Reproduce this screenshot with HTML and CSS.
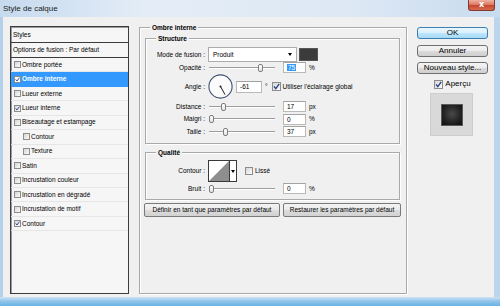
FILE: index.html
```html
<!DOCTYPE html>
<html lang="fr">

<head>
    <meta charset="UTF-8" />
    <title>Style de calque</title>
    <link rel="stylesheet" href="styles.css">
</head>

<body>
    <div class="window">
        <!-- barre de titre -->
        <div class="titlebar">
            <span class="title">Style de calque</span>
            <span class="close">x</span>
        </div>
        <div class="content">
            <!-- liste des styles -->
            <div class="styles">
                <div class="head head-top">Styles</div>
                <div class="head">Options de fusion : Par défaut</div>
                <div class="item"><span class="cb"></span>Ombre portée</div>
                <div class="item active"><span class="cb on"><svg viewBox="0 0 7 7"><path d="M1 3.4 L2.8 5.6 L6.2 0.9" /></svg></span>Ombre interne</div>
                <div class="item"><span class="cb"></span>Lueur externe</div>
                <div class="item"><span class="cb on"><svg viewBox="0 0 7 7"><path d="M1 3.4 L2.8 5.6 L6.2 0.9" /></svg></span>Lueur interne</div>
                <div class="item"><span class="cb"></span>Biseautage et estampage</div>
                <div class="item sub"><span class="cb"></span>Contour</div>
                <div class="item sub"><span class="cb"></span>Texture</div>
                <div class="item"><span class="cb"></span>Satin</div>
                <div class="item"><span class="cb"></span>Incrustation couleur</div>
                <div class="item"><span class="cb"></span>Incrustation en dégradé</div>
                <div class="item"><span class="cb"></span>Incrustation de motif</div>
                <div class="item"><span class="cb on"><svg viewBox="0 0 7 7"><path d="M1 3.4 L2.8 5.6 L6.2 0.9" /></svg></span>Contour</div>
            </div>

            <!-- réglages de l'effet -->
            <div class="group main">
                <div class="legend">Ombre interne</div>

                <div class="group structure">
                    <div class="legend">Structure</div>
                    <div class="row row-mode">
                        <span class="lbl">Mode de fusion :</span>
                        <div class="select">Produit<span class="arrow"></span></div>
                        <div class="swatch"></div>
                    </div>
                    <div class="row">
                        <span class="lbl">Opacité :</span>
                        <div class="slider"><div class="track"></div><span class="thumb" style="left: 74%"></span></div>
                        <div class="field"><span class="sel">75</span></div>
                        <span class="unit">%</span>
                    </div>
                    <div class="row row-angle">
                        <span class="lbl">Angle :</span>
                        <svg class="dial" width="25" height="25" viewBox="0 0 25 25">
                            <circle cx="12.5" cy="12.5" r="11.6" fill="#fbfbfb" stroke="#3f5274" stroke-width="1.1" />
                            <line x1="12.5" y1="12.5" x2="17" y2="20.6" stroke="#1c1c1c" stroke-width="1" />
                            <circle cx="12.5" cy="12.5" r="1" fill="#1c1c1c" />
                        </svg>
                        <div class="field field-angle">-61</div>
                        <span class="deg">°</span>
                        <span class="cb cb-big on"><svg viewBox="0 0 7 7"><path d="M1 3.4 L2.8 5.6 L6.2 0.9" /></svg></span>
                        <span class="cb-text">Utiliser l'éclairage global</span>
                    </div>
                    <div class="row row-gap">
                        <span class="lbl">Distance :</span>
                        <div class="slider"><div class="track"></div><span class="thumb" style="left: 18%"></span></div>
                        <div class="field">17</div>
                        <span class="unit">px</span>
                    </div>
                    <div class="row row-tight">
                        <span class="lbl">Maigri :</span>
                        <div class="slider"><div class="track"></div><span class="thumb" style="left: 0%"></span></div>
                        <div class="field">0</div>
                        <span class="unit">%</span>
                    </div>
                    <div class="row row-tight">
                        <span class="lbl">Taille :</span>
                        <div class="slider"><div class="track"></div><span class="thumb" style="left: 21%"></span></div>
                        <div class="field">37</div>
                        <span class="unit">px</span>
                    </div>
                </div>

                <div class="group quality">
                    <div class="legend">Qualité</div>
                    <div class="row row-curve">
                        <span class="lbl">Contour :</span>
                        <div class="curve"></div>
                        <div class="curve-arrow"><span class="arrow"></span></div>
                        <span class="cb cb-lisse"></span>
                        <span class="cb-text">Lissé</span>
                    </div>
                    <div class="row row-noise">
                        <span class="lbl">Bruit :</span>
                        <div class="slider"><div class="track"></div><span class="thumb" style="left: 0%"></span></div>
                        <div class="field">0</div>
                        <span class="unit">%</span>
                    </div>
                </div>

                <div class="defaults">
                    <div class="btn btn-set">Définir en tant que paramètres par défaut</div>
                    <div class="btn btn-reset">Restaurer les paramètres par défaut</div>
                </div>
            </div>

            <!-- boutons de droite -->
            <div class="side">
                <div class="btn-side ok">OK</div>
                <div class="btn-side cancel">Annuler</div>
                <div class="btn-side new">Nouveau style...</div>
                <div class="preview-check">
                    <span class="cb cb-big on"><svg viewBox="0 0 7 7"><path d="M1 3.4 L2.8 5.6 L6.2 0.9" /></svg></span>
                    <span>Aperçu</span>
                </div>
                <div class="preview">
                    <div class="preview-square"></div>
                </div>
            </div>
        </div>
        <div class="bottom-frame"></div>
    </div>
</body>

</html>
```

FILE: styles.css
```css
body {
    margin: 0;
    padding: 0;
    font-family: "Liberation Sans", Arial, sans-serif;
    font-size: 6.5px;
    line-height: 8px;
    color: #000;
    background-color: #b7d1ea;
}

.window {
    width: 500px;
    height: 306px;
    overflow: hidden;
    background: linear-gradient(to right, #b3cfe9, #d3e3f2 45%, #bcd5ec);
}

/* barre de titre */
.titlebar {
    height: 17px;
    display: flex;
    align-items: flex-start;
    background: linear-gradient(to right, #c6daee, #e4edf7 30%, #dde8f4 70%, #c8dbef);
}

.title {
    margin-left: 3px;
    font-size: 8px;
    line-height: 18px;
    color: #1b1b1b;
}

.close {
    margin-left: auto;
    margin-right: 5px;
    width: 27px;
    height: 11px;
    box-sizing: border-box;
    border: 1px solid #86382b;
    border-top: none;
    border-radius: 0 0 3px 3px;
    background: linear-gradient(#eeb2a2, #dc7a63 45%, #c8472f 55%, #d66a52);
    color: #fff;
    font: bold 8px/9px "DejaVu Sans", sans-serif;
    text-align: center;
}

.content {
    display: flex;
    align-items: flex-start;
    margin-left: 3px;
    width: 491px;
    height: 280px;
    background-color: #f0f0f0;
}

.bottom-frame {
    height: 9px;
    background: linear-gradient(#cfe2f3, #8ec3ea 50%, #6cb1e4);
}

/* liste des styles */
.styles {
    margin: 9px 0 0 7px;
    width: 119px;
    height: 268px;
    box-sizing: border-box;
    border: 1px solid #3c3c3c;
    box-shadow: inset 1px 1px 0 #9a9a9a;
    background-color: #f6f6f6;
}

.head {
    height: 14px;
    line-height: 14px;
    padding-left: 2px;
    border-bottom: 1px solid #3c3c3c;
}

.head-top {
    height: 15px;
    line-height: 15px;
}

.item {
    height: 14.45px;
    display: flex;
    align-items: center;
    padding-left: 3px;
    box-sizing: border-box;
    border-bottom: 1px solid #e6e6e6;
}

.item.sub {
    padding-left: 12px;
}

.item.active {
    background-color: #3399ff;
    color: #fff;
    font-weight: bold;
    border-bottom-color: #3399ff;
}

.cb {
    display: inline-block;
    width: 7px;
    height: 7px;
    box-sizing: border-box;
    margin-right: 1px;
    border: 1px solid #8c8c8c;
    background: linear-gradient(135deg, #d6d6d6, #fbfbfb);
    flex-shrink: 0;
}

.cb svg {
    display: block;
    width: 100%;
    height: 100%;
}

.cb svg path {
    fill: none;
    stroke: #24408c;
    stroke-width: 1.3;
}

.item.active .cb {
    background: #fff;
}

.cb-big {
    width: 9px;
    height: 9px;
}

/* groupes */
.group {
    box-sizing: border-box;
    border: 1px solid #a9a9a9;
    box-shadow: inset 1px 1px 0 #fff, 1px 1px 0 #fff;
}

.legend {
    display: table;
    margin: -5px 0 0 10px;
    padding: 0 2px;
    line-height: 9px;
    font-weight: bold;
    background-color: #f0f0f0;
}

.main {
    margin: 10px 0 0 10px;
    width: 268px;
    height: 267px;
    flex-shrink: 0;
}

.structure {
    margin: 6px 0 0 5px;
    width: 255px;
    height: 106px;
}

.quality {
    margin: 8px 0 0 5px;
    width: 255px;
    height: 48px;
}

.row {
    display: flex;
    align-items: center;
    height: 11px;
}

.row-mode {
    height: 15px;
    margin-top: 4px;
}

.row-angle {
    height: 25px;
    margin-top: 1px;
}

.row-gap {
    margin-top: 2px;
}

.row-tight {
    margin-top: 1.5px;
}

.lbl {
    width: 59px;
    margin-right: 3px;
    text-align: right;
    flex-shrink: 0;
}

.select {
    display: flex;
    align-items: center;
    width: 89px;
    height: 15px;
    box-sizing: border-box;
    padding-left: 4px;
    border: 1px solid #acacac;
    background-color: #fff;
}

.arrow {
    width: 0;
    height: 0;
    margin-left: auto;
    margin-right: 4px;
    border-left: 2.5px solid transparent;
    border-right: 2.5px solid transparent;
    border-top: 3px solid #000;
}

.swatch {
    width: 19px;
    height: 13px;
    margin-left: 2px;
    box-sizing: border-box;
    border: 1px solid #555;
    background-color: #3b3b3b;
}

.slider {
    position: relative;
    width: 66px;
    height: 11px;
    margin-left: 1px;
    display: flex;
    align-items: center;
}

.track {
    width: 100%;
    height: 0;
    border-top: 1px solid #9d9d9d;
    border-bottom: 1px solid #fff;
}

.thumb {
    position: absolute;
    top: 1.5px;
    width: 5px;
    height: 8px;
    box-sizing: border-box;
    border: 1px solid #7d7d7d;
    border-radius: 2px;
    background: linear-gradient(#fff, #e4e4e4);
}

.field {
    width: 23px;
    height: 11px;
    margin-left: 8px;
    box-sizing: border-box;
    padding-left: 3px;
    border: 1px solid #b9b9b9;
    border-top-color: #a3a3a3;
    background-color: #fff;
    line-height: 9px;
}

.sel {
    background-color: #3399ff;
    color: #fff;
    padding: 0 1px;
}

.unit {
    margin-left: 3px;
}

.dial {
    display: block;
    flex-shrink: 0;
}

.field-angle {
    width: 26px;
    height: 12px;
    margin-left: 3px;
    line-height: 10px;
}

.deg {
    margin-left: 3px;
    margin-right: 4px;
}

.cb-text {
    margin-left: 1px;
}

/* qualité */
.row-curve {
    height: 22px;
    margin-top: 3px;
}

.curve {
    width: 22px;
    height: 22px;
    box-sizing: border-box;
    border: 1px solid #3a3a3a;
    background: linear-gradient(to bottom right, #fff 49.5%, #8e8e8e 50.5%);
}

.curve-arrow {
    display: flex;
    align-items: center;
    width: 7px;
    height: 22px;
    box-sizing: border-box;
    border: 1px solid #3a3a3a;
    border-left: none;
    background-color: #fff;
}

.curve-arrow .arrow {
    margin: 0 auto;
    border-left-width: 2px;
    border-right-width: 2px;
}

.cb-lisse {
    margin-left: 8px;
    width: 8px;
    height: 8px;
}

.row-noise {
    margin-top: 1px;
}

/* boutons du bas */
.defaults {
    display: flex;
    margin: 3px 0 0 4px;
}

.btn {
    height: 14px;
    box-sizing: border-box;
    border: 1px solid #7a7a7a;
    border-radius: 2px;
    background: linear-gradient(#f4f4f4, #eaeaea 48%, #dcdcdc 52%, #d2d2d2);
    line-height: 12px;
    text-align: center;
}

.btn-set {
    width: 136px;
}

.btn-reset {
    width: 118px;
    margin-left: 3px;
}

/* colonne de droite */
.side {
    margin: 10px 0 0 10px;
    width: 71px;
    font-size: 8px;
}

.btn-side {
    height: 12px;
    box-sizing: border-box;
    border: 1px solid #707070;
    border-radius: 3px;
    background: linear-gradient(#f4f4f4, #ebebeb 48%, #dbdbdb 52%, #cfcfcf);
    line-height: 10px;
    text-align: center;
}

.btn-side.ok {
    border-color: #3c7fb1;
    background: linear-gradient(#eaf6fd, #d9f0fc 48%, #bee6fd 52%, #a7d9f5);
}

.btn-side.cancel {
    margin-top: 6px;
}

.btn-side.new {
    margin-top: 5px;
}

.preview-check {
    display: flex;
    align-items: center;
    justify-content: center;
    height: 10px;
    margin-top: 5px;
}

.preview-check .cb {
    margin-right: 2px;
}

.preview {
    display: flex;
    align-items: center;
    justify-content: center;
    width: 43px;
    height: 43px;
    margin: 4px 0 0 13px;
    box-sizing: border-box;
    border: 1px solid #cdcdcd;
    background-color: #d9d9d9;
}

.preview-square {
    width: 22px;
    height: 22px;
    box-sizing: border-box;
    border: 1px solid #5a5a5a;
    background: radial-gradient(circle at 50% 45%, #4a4a4a, #222 60%, #0c0c0c);
}
```
